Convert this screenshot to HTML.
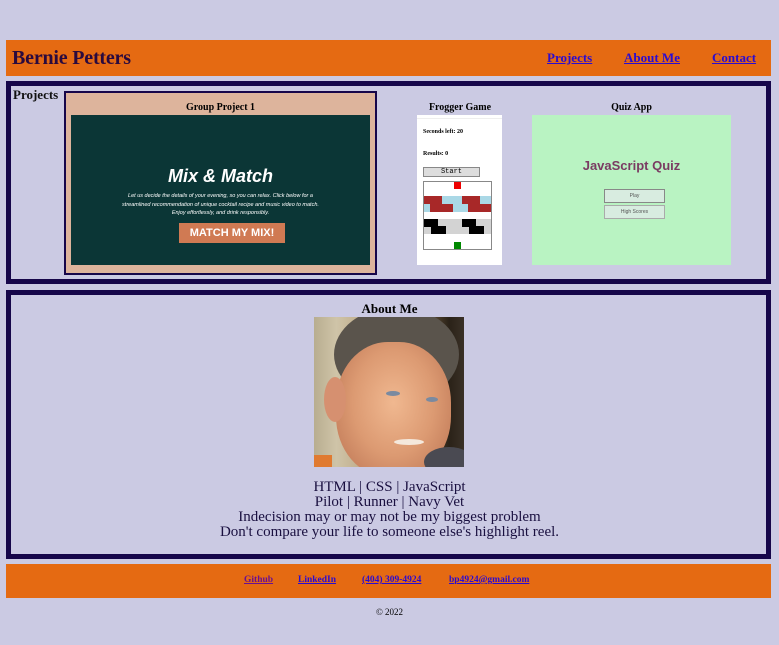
<!DOCTYPE html>
<html><head><meta charset="utf-8">
<style>
*{margin:0;padding:0;box-sizing:border-box}
html,body{width:779px;height:645px;overflow:hidden;background:#cbcae3;font-family:"Liberation Serif",serif;position:relative}
.a{position:absolute}
a{color:#2b0bd0;text-decoration:underline;font-weight:bold}
.ctr{text-align:center}
</style></head><body>
<div class="a" style="left:6px;top:40px;width:765px;height:36px;background:#e56a12"></div>
<div class="a" style="left:12px;top:47px;font-size:20px;font-weight:bold;color:#2a0a3e;letter-spacing:-0.2px">Bernie Petters</div>
<a class="a" style="left:547px;top:50px;font-size:13px" href="#">Projects</a>
<a class="a" style="left:624px;top:50px;font-size:13px" href="#">About Me</a>
<a class="a" style="left:712px;top:50px;font-size:13px" href="#">Contact</a>

<div class="a" style="left:6px;top:81px;width:765px;height:203px;border:5px solid #16064a"></div>
<div class="a" style="left:13px;top:87px;font-size:13px;font-weight:bold;color:#111">Projects</div>

<div class="a" style="left:64px;top:91px;width:313px;height:184px;border:2px solid #16064a;background:#ddb49c"></div>
<div class="a ctr" style="left:64px;top:102px;width:313px;font-size:10px;font-weight:bold">Group Project 1</div>
<div class="a" style="left:71px;top:115px;width:299px;height:150px;background:#0b3636;color:#fff;font-family:'Liberation Sans',sans-serif;text-align:center">
 <div style="position:absolute;top:51px;width:100%;font-size:18px;font-weight:bold;font-style:italic">Mix &amp; Match</div>
 <div style="position:absolute;top:77px;width:100%;font-size:5.5px;font-style:italic;line-height:8.5px">Let us decide the details of your evening, so you can relax. Click below for a<br>streamlined recommendation of unique cocktail recipe and music video to match.<br>Enjoy effortlessly, and drink responsibly.</div>
 <div style="position:absolute;left:108px;top:108px;width:106px;height:20px;background:#d07a53;font-size:11px;font-weight:bold;line-height:20px">MATCH MY MIX!</div>
</div>

<div class="a ctr" style="left:410px;top:102px;width:100px;font-size:10px;font-weight:bold">Frogger Game</div>
<div class="a" style="left:417px;top:115px;width:85px;height:150px;background:#fff;font-size:6px;font-weight:bold">
 <div style="position:absolute;left:0;top:3px;width:85px;height:1px;background:#eee"></div>
 <div style="position:absolute;left:6px;top:14px">Seconds left: 20</div>
 <div style="position:absolute;left:6px;top:36px">Results: 0</div>
 <div style="position:absolute;left:6px;top:52px;width:57px;height:10px;background:#ddd;border:1px solid #888;font-family:'Liberation Mono',monospace;font-size:7px;text-align:center;line-height:8px;font-weight:normal">Start</div>
 <div style="position:absolute;left:6px;top:66px;width:69px;height:69px;border:1px solid #888;background:#fff;overflow:hidden">
  <div style="position:absolute;left:30px;top:0;width:7px;height:7px;background:#e00"></div>
  <div style="position:absolute;left:0;top:14px;width:69px;height:16px;background:#aad8e6"></div>
  <div style="position:absolute;left:0;top:14px;width:18px;height:8px;background:#a82828"></div>
  <div style="position:absolute;left:6px;top:22px;width:23px;height:8px;background:#a82828"></div>
  <div style="position:absolute;left:38px;top:14px;width:18px;height:8px;background:#a82828"></div>
  <div style="position:absolute;left:44px;top:22px;width:25px;height:8px;background:#a82828"></div>
  <div style="position:absolute;left:0;top:37px;width:69px;height:15px;background:#d3d3d3"></div>
  <div style="position:absolute;left:0;top:37px;width:14px;height:8px;background:#000"></div>
  <div style="position:absolute;left:7px;top:44px;width:15px;height:8px;background:#000"></div>
  <div style="position:absolute;left:38px;top:37px;width:14px;height:8px;background:#000"></div>
  <div style="position:absolute;left:45px;top:44px;width:15px;height:8px;background:#000"></div>
  <div style="position:absolute;left:30px;top:60px;width:7px;height:9px;background:#080"></div>
 </div>
</div>

<div class="a ctr" style="left:532px;top:102px;width:199px;font-size:10px;font-weight:bold">Quiz App</div>
<div class="a" style="left:532px;top:115px;width:199px;height:150px;background:#b9f3c2;font-family:'Liberation Sans',sans-serif;text-align:center">
 <div style="position:absolute;top:43px;width:100%;font-size:13px;font-weight:bold;color:#7a3b62">JavaScript Quiz</div>
 <div style="position:absolute;left:72px;top:74px;width:61px;height:14px;background:#d8ece0;border:1px solid #888;font-size:5px;line-height:12px;color:#555">Play</div>
 <div style="position:absolute;left:72px;top:90px;width:61px;height:14px;background:#d8ece0;border:1px solid #aaa;font-size:5px;line-height:12px;color:#555">High Scores</div>
</div>

<div class="a" style="left:6px;top:290px;width:765px;height:269px;border:5px solid #16064a"></div>
<div class="a ctr" style="left:0;top:301px;width:779px;font-size:13px;font-weight:bold">About Me</div>
<div class="a" style="left:314px;top:317px;width:150px;height:150px;overflow:hidden;background:linear-gradient(90deg,#b8ad90 0,#cfc4a8 15%,#a8885e 60%,#2a2218 90%,#3a3026 100%)">
 <div style="position:absolute;left:20px;top:-10px;width:125px;height:95px;border-radius:50%;background:#5a544c"></div>
 <div style="position:absolute;left:22px;top:25px;width:115px;height:135px;border-radius:45%;background:radial-gradient(ellipse at 50% 45%,#f0b890 0,#dc9a72 50%,#b87050 100%)"></div>
 <div style="position:absolute;left:10px;top:60px;width:22px;height:45px;border-radius:50%;background:#d69070"></div>
 <div style="position:absolute;left:72px;top:74px;width:14px;height:5px;border-radius:50%;background:#7a8aa0"></div>
 <div style="position:absolute;left:112px;top:80px;width:12px;height:5px;border-radius:50%;background:#7a8aa0"></div>
 <div style="position:absolute;left:80px;top:122px;width:30px;height:6px;border-radius:50%;background:#f4e8dc"></div>
 <div style="position:absolute;left:0;top:138px;width:18px;height:14px;background:#e07a30"></div>
 <div style="position:absolute;left:110px;top:130px;width:50px;height:30px;border-radius:50%;background:#4a4a52"></div>
</div>
<div class="a ctr" style="left:0;top:480px;width:779px;font-size:15px;line-height:15px;color:#1a1040">HTML | CSS | JavaScript<br>Pilot | Runner | Navy Vet<br>Indecision may or may not be my biggest problem<br>Don't compare your life to someone else's highlight reel.</div>

<div class="a" style="left:6px;top:564px;width:765px;height:34px;background:#e56a12"></div>
<a class="a" style="left:244px;top:575px;font-size:9.5px;color:#6a1090" href="#">Github</a>
<a class="a" style="left:298px;top:575px;font-size:9.5px" href="#">LinkedIn</a>
<a class="a" style="left:362px;top:575px;font-size:9.5px" href="#">(404) 309-4924</a>
<a class="a" style="left:449px;top:575px;font-size:9.5px" href="#">bp4924@gmail.com</a>
<div class="a ctr" style="left:0;top:607px;width:779px;font-size:9px">© 2022</div>
</body></html>
